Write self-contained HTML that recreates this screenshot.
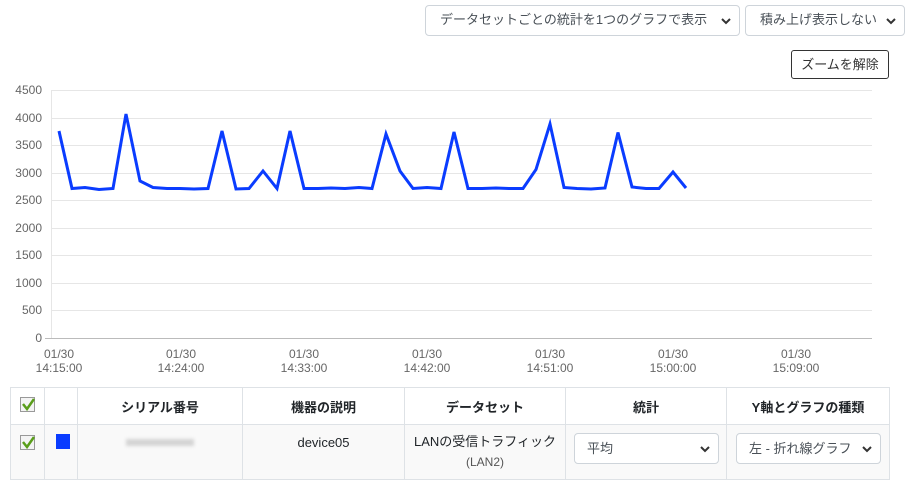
<!DOCTYPE html>
<html><head><meta charset="utf-8"><style>
body{margin:0;width:909px;height:491px;background:#fff;font-family:"Liberation Sans","Noto Sans CJK JP",sans-serif;color:#212529;position:relative;overflow:hidden}
.sel{position:absolute;border:1px solid #ced4da;border-radius:4px;background:#fff;font-size:13px;color:#495057;box-sizing:border-box;line-height:28px;padding-left:12px;text-align:left;white-space:nowrap}
.sel svg{position:absolute;right:8px;top:11px}
.btn{position:absolute;left:791px;top:50px;width:98px;height:29px;border:1px solid #333;border-radius:3px;box-sizing:border-box;font-size:13px;text-align:center;line-height:27px;color:#333}
table{position:absolute;left:10px;top:387px;border-collapse:collapse;font-size:13px}
td,th{border:1px solid #dee2e6;text-align:center;padding:0}
th{height:36px;font-weight:bold}
tr.b td{height:44px;padding-top:10px;background:#f9f9f9;vertical-align:top}
.cb{display:inline-block;width:15px;height:15px;border:1px solid #999;background:#f4f4f4;position:relative;box-sizing:border-box}
.cb svg{position:absolute;left:1px;top:0}
</style></head><body>
<div class="sel" style="left:425px;top:5px;width:315px;height:31px;padding-left:14px">データセットごとの統計を1つのグラフで表示<svg width="10" height="8"><path d="M1 2l4 4 4-4" stroke="#333" stroke-width="2" fill="none"/></svg></div>
<div class="sel" style="left:745px;top:5px;width:160px;height:31px;padding-left:14px">積み上げ表示しない<svg width="10" height="8"><path d="M1 2l4 4 4-4" stroke="#333" stroke-width="2" fill="none"/></svg></div>
<div class="btn">ズームを解除</div>
<svg style="position:absolute;left:0;top:0" width="909" height="385" font-family="Liberation Sans, sans-serif" font-size="12" fill="#666">
<g stroke="#e6e6e6" stroke-width="1">
<line x1="51" x2="872" y1="90.5" y2="90.5"/><line x1="51" x2="872" y1="118.5" y2="118.5"/><line x1="51" x2="872" y1="145.5" y2="145.5"/><line x1="51" x2="872" y1="173.5" y2="173.5"/><line x1="51" x2="872" y1="200.5" y2="200.5"/><line x1="51" x2="872" y1="228.5" y2="228.5"/><line x1="51" x2="872" y1="255.5" y2="255.5"/><line x1="51" x2="872" y1="283.5" y2="283.5"/><line x1="51" x2="872" y1="310.5" y2="310.5"/>
<line x1="51.5" x2="51.5" y1="90" y2="338"/>
</g>
<line x1="45" x2="872" y1="338.5" y2="338.5" stroke="#bbb"/>
<g text-anchor="end">
<text x="42" y="94">4500</text><text x="42" y="122">4000</text><text x="42" y="149">3500</text><text x="42" y="177">3000</text><text x="42" y="204">2500</text><text x="42" y="232">2000</text><text x="42" y="259">1500</text><text x="42" y="287">1000</text><text x="42" y="314">500</text><text x="42" y="342">0</text>
</g>
<g text-anchor="middle">
<text x="59" y="358">01/30</text><text x="59" y="372">14:15:00</text>
<text x="181" y="358">01/30</text><text x="181" y="372">14:24:00</text>
<text x="304" y="358">01/30</text><text x="304" y="372">14:33:00</text>
<text x="427" y="358">01/30</text><text x="427" y="372">14:42:00</text>
<text x="550" y="358">01/30</text><text x="550" y="372">14:51:00</text>
<text x="673" y="358">01/30</text><text x="673" y="372">15:00:00</text>
<text x="796" y="358">01/30</text><text x="796" y="372">15:09:00</text>
</g>
<polyline fill="none" stroke="#0a3cff" stroke-width="3" stroke-linejoin="miter" points="59,131 72,188.5 85,187.5 99,189.5 113,188.5 126,114 140,181 153,187.5 167,188.5 180,188.5 194,189 208,188.5 222,131 236,189 249,188.5 263,171 277,188.5 290,131 304,188.5 318,188.5 331,188 345,188.5 359,187.5 372,188.5 386,134 400,171 413,188.5 427,187.5 441,188.5 454,132 468,188.5 482,188.5 496,188 509,188.5 523,188.5 536,169.5 550,124 564,187.5 577,188.5 591,189 605,188 618,132.5 632,187 646,188.5 659,188.5 673,172 686,188"/>
</svg>
<table>
<tr><th style="width:33px"><span class="cb"><svg width="13" height="13"><path d="M1 6l4 5 7-10" stroke="#5a9e1b" stroke-width="2.5" fill="none"/></svg></span></th><th style="width:32px"></th><th style="width:164px">シリアル番号</th><th style="width:161px">機器の説明</th><th style="width:160px">データセット</th><th style="width:160px">統計</th><th style="width:162px">Y軸とグラフの種類</th></tr>
<tr class="b"><td><span class="cb"><svg width="13" height="13"><path d="M1 6l4 5 7-10" stroke="#5a9e1b" stroke-width="2.5" fill="none"/></svg></span></td><td><div style="width:14px;height:15px;background:#0a3cff;margin:-1px 0 0 11px"></div></td><td><div style="width:68px;height:7px;background:#d4d4d4;margin:4px auto 0;filter:blur(1.5px)"></div></td><td>device05</td><td style="line-height:20px;padding-top:7px">LANの受信トラフィック<br><span style="font-size:12px;color:#555">(LAN2)</span></td><td style="position:relative"><div class="sel" style="left:8px;top:8px;width:145px;height:31px;line-height:30px">平均<svg width="10" height="8"><path d="M1 2l4 4 4-4" stroke="#333" stroke-width="2" fill="none"/></svg></div></td><td style="position:relative"><div class="sel" style="left:9px;top:8px;width:145px;height:31px;line-height:30px">左 - 折れ線グラフ<svg width="10" height="8"><path d="M1 2l4 4 4-4" stroke="#333" stroke-width="2" fill="none"/></svg></div></td></tr>
</table>
</body></html>
